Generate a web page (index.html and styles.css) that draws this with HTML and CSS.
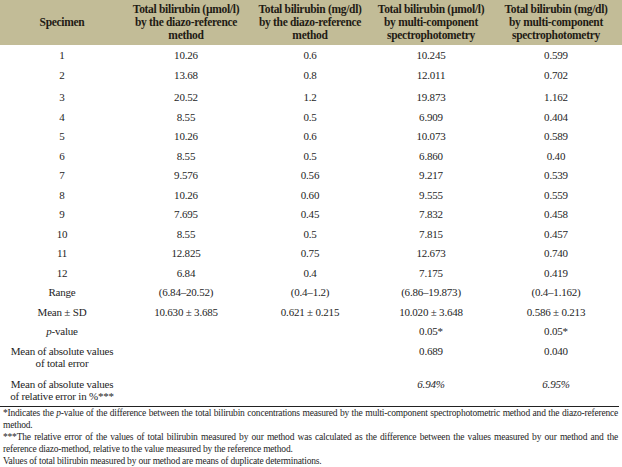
FILE: index.html
```html
<!DOCTYPE html>
<html>
<head>
<meta charset="utf-8">
<link rel="stylesheet" href="styles.css">
</head>
<body>
<table class="data">
  <colgroup>
    <col class="c1"><col class="c2"><col class="c3"><col class="c4"><col class="c5">
  </colgroup>
  <thead>
    <tr>
      <th>Specimen</th>
      <th>Total bilirubin (µmol/l)<br>by the diazo-reference<br>method</th>
      <th>Total bilirubin (mg/dl)<br>by the diazo-reference<br>method</th>
      <th>Total bilirubin (µmol/l)<br>by multi-component<br>spectrophotometry</th>
      <th>Total bilirubin (mg/dl)<br>by multi-component<br>spectrophotometry</th>
    </tr>
  </thead>
  <tbody>
    <tr class="r-first"><td>1</td><td>10.26</td><td>0.6</td><td>10.245</td><td>0.599</td></tr>
    <tr class="r-tall"><td>2</td><td>13.68</td><td>0.8</td><td>12.011</td><td>0.702</td></tr>
    <tr><td>3</td><td>20.52</td><td>1.2</td><td>19.873</td><td>1.162</td></tr>
    <tr><td>4</td><td>8.55</td><td>0.5</td><td>6.909</td><td>0.404</td></tr>
    <tr><td>5</td><td>10.26</td><td>0.6</td><td>10.073</td><td>0.589</td></tr>
    <tr><td>6</td><td>8.55</td><td>0.5</td><td>6.860</td><td>0.40</td></tr>
    <tr><td>7</td><td>9.576</td><td>0.56</td><td>9.217</td><td>0.539</td></tr>
    <tr><td>8</td><td>10.26</td><td>0.60</td><td>9.555</td><td>0.559</td></tr>
    <tr><td>9</td><td>7.695</td><td>0.45</td><td>7.832</td><td>0.458</td></tr>
    <tr><td>10</td><td>8.55</td><td>0.5</td><td>7.815</td><td>0.457</td></tr>
    <tr><td>11</td><td>12.825</td><td>0.75</td><td>12.673</td><td>0.740</td></tr>
    <tr><td>12</td><td>6.84</td><td>0.4</td><td>7.175</td><td>0.419</td></tr>
    <tr><td>Range</td><td>(6.84–20.52)</td><td>(0.4–1.2)</td><td>(6.86–19.873)</td><td>(0.4–1.162)</td></tr>
    <tr><td>Mean ± SD</td><td>10.630 ± 3.685</td><td>0.621 ± 0.215</td><td>10.020 ± 3.648</td><td>0.586 ± 0.213</td></tr>
    <tr><td><i>p</i>-value</td><td></td><td></td><td>0.05*</td><td>0.05*</td></tr>
    <tr class="r-two"><td>Mean of absolute values<br>of total error</td><td></td><td></td><td>0.689</td><td>0.040</td></tr>
    <tr class="r-two r-last"><td>Mean of absolute values<br>of relative error in %***</td><td></td><td></td><td><i>6.94%</i></td><td><i>6.95%</i></td></tr>
  </tbody>
</table>
<div class="rule"></div>
<div class="notes">
  <div class="fn just">*Indicates the <i>p</i>-value of the difference between the total bilirubin concentrations measured by the multi-component spectrophotometric method and the diazo-reference</div>
  <div class="fn">method.</div>
  <div class="fn just">***The relative error of the values of total bilirubin measured by our method was calculated as the difference between the values measured by our method and the</div>
  <div class="fn">reference diazo-method, relative to the value measured by the reference method.</div>
  <div class="fn">Values of total bilirubin measured by our method are means of duplicate determinations.</div>
</div>
</body>
</html>
```

FILE: styles.css
```css
html, body {
  margin: 0;
  padding: 0;
  background: #ffffff;
}
body {
  width: 622px;
  font-family: "Liberation Serif", "Times New Roman", serif;
  color: #1e1e1e;
}
.data {
  width: 622px;
  border-collapse: collapse;
  table-layout: fixed;
}
.c1 { width: 124px; }
.c2 { width: 124px; }
.c3 { width: 124px; }
.c4 { width: 118px; }
.c5 { width: 132px; }
.data th {
  background: #c2bc97;
  font-weight: bold;
  font-size: 11.5px;
  line-height: 13px;
  height: 39px;
  padding: 3px 0;
  text-align: center;
  vertical-align: middle;
  color: #1f1b14;
  letter-spacing: -0.3px;
}
.data td {
  font-size: 11px;
  line-height: 12px;
  padding: 4px 0 3.5px;
  text-align: center;
  vertical-align: top;
  white-space: nowrap;
  letter-spacing: -0.2px;
}
.data tr.r-tall td {
  padding-bottom: 6.5px;
}
.data tr.r-two td {
  padding-top: 4px;
  padding-bottom: 4px;
}
.data tr.r-last td {
  padding-top: 5.3px;
  padding-bottom: 4px;
}
.rule {
  height: 0;
  border-top: 1px solid #222;
  margin-right: 3px;
}
.notes {
  padding: 0 4px 0 3px;
}
.fn {
  font-size: 9.5px;
  line-height: 12px;
  white-space: nowrap;
  letter-spacing: -0.2px;
}
.fn.just {
  text-align: justify;
  text-align-last: justify;
  white-space: normal;
}
```
